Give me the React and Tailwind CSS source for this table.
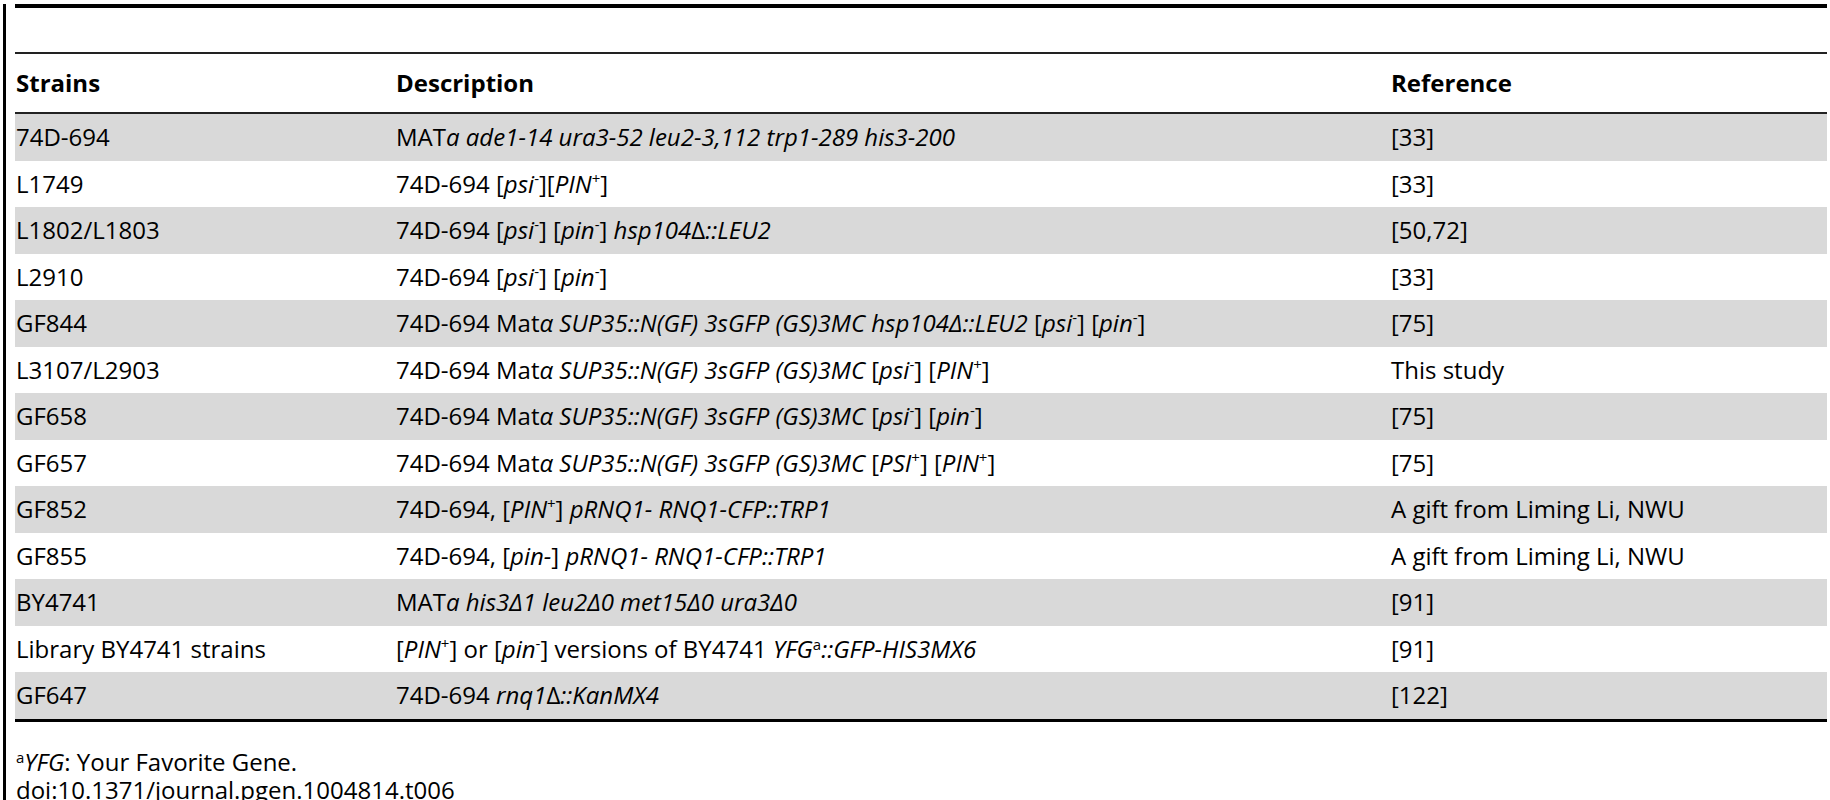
const Neg = () => <sup className="text-[15px] top-[-0.6em]">-</sup>;
const Pos = () => <sup className="text-[15px] top-[-0.6em]">+</sup>;

const rows = [
    {
        strain: "74D-694",
        desc: <>MAT<i>a ade1-14 ura3-52 leu2-3,112 trp1-289 his3-200</i></>,
        ref: "[33]",
    },
    {
        strain: "L1749",
        desc: <>74D-694 [<i>psi</i><Neg />][<i>PIN</i><Pos />]</>,
        ref: "[33]",
    },
    {
        strain: "L1802/L1803",
        desc: <>74D-694 [<i>psi</i><Neg />] [<i>pin</i><Neg />] <i>hsp104</i>Δ<i>::LEU2</i></>,
        ref: "[50,72]",
    },
    {
        strain: "L2910",
        desc: <>74D-694 [<i>psi</i><Neg />] [<i>pin</i><Neg />]</>,
        ref: "[33]",
    },
    {
        strain: "GF844",
        desc: <>74D-694 Mat<i>α SUP35::N(GF) 3sGFP (GS)3MC hsp104Δ::LEU2</i> [<i>psi</i><Neg />] [<i>pin</i><Neg />]</>,
        ref: "[75]",
    },
    {
        strain: "L3107/L2903",
        desc: <>74D-694 Mat<i>α SUP35::N(GF) 3sGFP (GS)3MC</i> [<i>psi</i><Neg />] [<i>PIN</i><Pos />]</>,
        ref: "This study",
    },
    {
        strain: "GF658",
        desc: <>74D-694 Mat<i>α SUP35::N(GF) 3sGFP (GS)3MC</i> [<i>psi</i><Neg />] [<i>pin</i><Neg />]</>,
        ref: "[75]",
    },
    {
        strain: "GF657",
        desc: <>74D-694 Mat<i>α SUP35::N(GF) 3sGFP (GS)3MC</i> [<i>PSI</i><Pos />] [<i>PIN</i><Pos />]</>,
        ref: "[75]",
    },
    {
        strain: "GF852",
        desc: <>74D-694, [<i>PIN</i><Pos />] <i>pRNQ1- RNQ1-CFP::TRP1</i></>,
        ref: "A gift from Liming Li, NWU",
    },
    {
        strain: "GF855",
        desc: <>74D-694, [<i>pin-</i>] <i>pRNQ1- RNQ1-CFP::TRP1</i></>,
        ref: "A gift from Liming Li, NWU",
    },
    {
        strain: "BY4741",
        desc: <>MAT<i>a his3Δ1 leu2Δ0 met15Δ0 ura3Δ0</i></>,
        ref: "[91]",
    },
    {
        strain: "Library BY4741 strains",
        desc: <>[<i>PIN</i><Pos />] or [<i>pin</i><Neg />] versions of BY4741 <i>YFG</i><sup className="text-[15px]">a</sup><i>::GFP-HIS3MX6</i></>,
        ref: "[91]",
    },
    {
        strain: "GF647",
        desc: <>74D-694 <i>rnq1</i>Δ<i>::KanMX4</i></>,
        ref: "[122]",
    },
];

export default function App() {
    return (
        <div className="h-[800px] overflow-hidden bg-white pl-[3px] text-[24px] text-black font-['Open_Sans',sans-serif]">
            <div className="h-[800px] border-l-[3px] border-black pl-[9px] pr-[3px]">
                <div className="mt-[4px] h-[4px] bg-black" />
                <div className="h-[44px]" />
                <div className="h-[2px] bg-[#222]" />

                <div className="grid grid-cols-[380px_995px_1fr] h-[60px] items-center pl-[1px] font-bold border-b-2 border-[#222]">
                    <div>Strains</div>
                    <div>Description</div>
                    <div>Reference</div>
                </div>

                {
                    rows.map((row, i) => (
                        <div
                            key={row.strain}
                            className={`${i % 2 === 0 ? 'bg-[#d9d9d9]' : 'bg-white'} flex h-[46.5px] items-center pl-[1px] whitespace-nowrap`}
                        >
                            <div className="w-[380px] shrink-0">{row.strain}</div>
                            <div className="w-[995px] shrink-0">{row.desc}</div>
                            <div>{row.ref}</div>
                        </div>
                    ))
                }

                <div className="h-[3px] bg-black" />

                <div className="pt-[26px] pl-[1px] leading-[28px]">
                    <p><sup className="text-[15px]">a</sup><i>YFG</i>: Your Favorite Gene.</p>
                    <p>doi:10.1371/journal.pgen.1004814.t006</p>
                </div>
            </div>
        </div>
    )
}
